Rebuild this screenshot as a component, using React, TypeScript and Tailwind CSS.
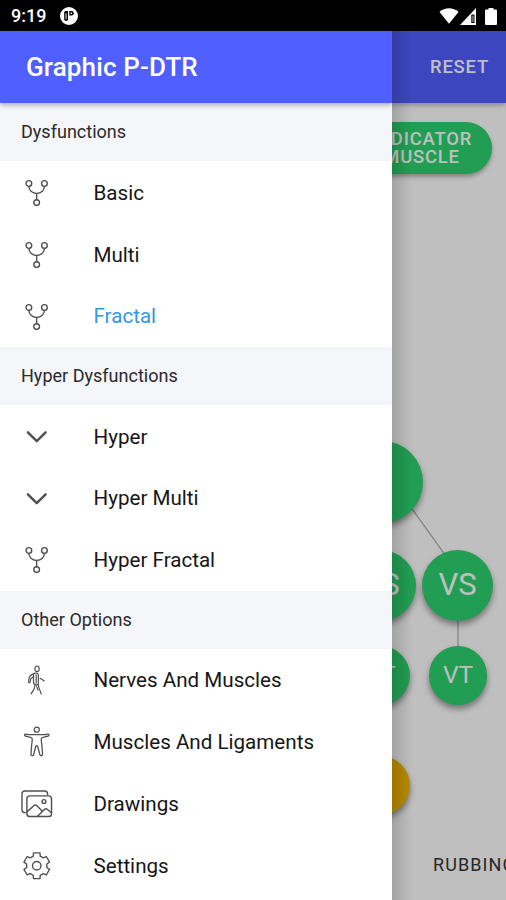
import React, { FC } from 'react';
import type { IconType } from 'react-icons';
import { IoChevronDownOutline, IoImagesOutline } from 'react-icons/io5';

interface FigureProps { className?: string; }

const ForkFigure: FC<FigureProps> = ({ className }) => (
  <svg className={className} viewBox="0 0 32 32" fill="none" stroke="currentColor" strokeWidth="1.4" strokeLinecap="round">
    <circle cx="8" cy="6.600" r="2.900" />
    <circle cx="23.800" cy="6.600" r="2.900" />
    <circle cx="15.900" cy="26" r="2.900" />
    <path d="M8 9.500C8 13.500 11.200 16.700 15.900 16.700S23.800 13.500 23.800 9.500M15.900 16.700V23" />
  </svg>
);

const WalkFigure: FC<FigureProps> = ({ className }) => (
  <svg className={className} viewBox="0 0 32 32" fill="none" stroke="currentColor" strokeWidth="1.2" strokeLinecap="round" strokeLinejoin="round">
    <ellipse cx="16.300" cy="3.800" rx="2.200" ry="2.800" />
    <path d="M13.600 8.500C11 9.600 8.600 11.500 8.200 13L7.700 17.200C7.900 18.300 9 18.200 9.300 17.200L9.900 13.900L12.300 12.200" />
    <path d="M13.600 8.500C15.500 7.600 17.600 8.300 17.600 10.200V18.800C17.600 19.800 17 20.500 16 20.500C14 20.300 12.700 19.200 12.700 17.600V9.500" />
    <path d="M15.400 10V18.500M19.500 13.500L23.600 16.200" />
    <path d="M14.200 20.500L13.200 24.500L10.300 29.300M17.600 20L18.200 23L20.600 29.600M16 22L17.200 25.500" />
  </svg>
);

const BodyFigure: FC<FigureProps> = ({ className }) => (
  <svg className={className} viewBox="0 0 32 32" fill="none" stroke="currentColor" strokeWidth="1.3" strokeLinecap="round" strokeLinejoin="round">
    <circle cx="16" cy="3.700" r="2.600" />
    <path d="M5 8.200C8 9.200 12 8.700 16 8.700S24 9.200 27 8.200C28.700 8 28.900 9.800 27.500 10.300C25 11.200 21.500 11.200 20.800 12.400C20.300 13.500 20.700 16 21.200 19.500L21.900 28.800C21.900 30.500 19.600 30.700 19.200 29.200L16.900 20.500C16.600 19.700 15.400 19.700 15.100 20.500L12.800 29.200C12.400 30.700 10.100 30.500 10.100 28.800L10.800 19.500C11.300 16 11.700 13.500 11.200 12.400C10.500 11.200 7 11.200 4.500 10.300C3.100 9.800 3.300 8 5 8.200Z" />
  </svg>
);

// Six teeth, four corners per tooth: root, tip, tip, root
const GEAR_POINTS = [0, 60, 120, 180, 240, 300]
  .flatMap((tooth) => [[-20, 10.4], [-14, 13.5], [14, 13.5], [20, 10.4]].map(([offset, radius]) => {
    const angle = ((tooth + offset) * Math.PI) / 180;
    return `${(16 + radius * Math.sin(angle)).toFixed(2)},${(16 - radius * Math.cos(angle)).toFixed(2)}`;
  }))
  .join(' ');

const GearFigure: FC<FigureProps> = ({ className }) => (
  <svg className={className} viewBox="0 0 32 32" fill="none" stroke="currentColor" strokeWidth="1.4" strokeLinejoin="round">
    <polygon points={GEAR_POINTS} />
    <circle cx="16" cy="16" r="4.300" />
  </svg>
);

interface MenuEntry { label: string; icon: IconType | FC<FigureProps>; active?: boolean; }
interface MenuSection { title: string; entries: MenuEntry[]; }

const SECTIONS: MenuSection[] = [
  {
    title: 'Dysfunctions',
    entries: [
      { label: 'Basic', icon: ForkFigure },
      { label: 'Multi', icon: ForkFigure },
      { label: 'Fractal', icon: ForkFigure, active: true },
    ],
  },
  {
    title: 'Hyper Dysfunctions',
    entries: [
      { label: 'Hyper', icon: IoChevronDownOutline },
      { label: 'Hyper Multi', icon: IoChevronDownOutline },
      { label: 'Hyper Fractal', icon: ForkFigure },
    ],
  },
  {
    title: 'Other Options',
    entries: [
      { label: 'Nerves And Muscles', icon: WalkFigure },
      { label: 'Muscles And Ligaments', icon: BodyFigure },
      { label: 'Drawings', icon: IoImagesOutline },
      { label: 'Settings', icon: GearFigure },
    ],
  },
];

const StatusBar: FC = () => (
  <div className="h-[31px] shrink-0 bg-black text-white flex items-center justify-between pl-[11px] pr-[9px] pt-[1px]">
    <div className="flex items-center gap-[14px]">
      <span className="text-[18px] leading-none font-medium">9:19</span>
      <svg className="w-[18px] h-[18px]" viewBox="0 0 18 18">
        <circle cx="9" cy="9" r="9" fill="white" />
        <path d="M4.200 5.500a1.500 1.500 0 0 1 1.500-1.500H8v8.500a2 2 0 0 1-3.800 0z" fill="black" />
        <path d="M9.300 4h2.200a2.300 2.300 0 0 1 2.300 2.300 2.300 2.300 0 0 1-2.300 2.300H9.300z" fill="black" />
        <path d="M5.600 6.200h.9v6h-.9zM10.600 5.500h1.500v1.600h-1.500z" fill="white" />
      </svg>
    </div>
    <div className="flex items-center">
      <svg className="w-[20px] h-[16px]" viewBox="0 0 20 16">
        <path d="M0.500 4C6-1 14-1 19.500 4L10 15.800z" fill="white" />
      </svg>
      <svg className="w-[16px] h-[17px] ml-[1px]" viewBox="0 0 16 17">
        <path d="M16 0v17H0z" fill="white" />
        <path d="M11.300 6.500h3.200V15h-3.200z" fill="black" />
        <path d="M12.600 7.500h.8v6.500h-.8z" fill="white" />
      </svg>
      <svg className="w-[12px] h-[17px] ml-[9px]" viewBox="0 0 12 17">
        <path d="M3.500 0h5v1.600H11a1 1 0 0 1 1 1V16a1 1 0 0 1-1 1H1a1 1 0 0 1-1-1V2.600a1 1 0 0 1 1-1h2.500z" fill="white" />
      </svg>
    </div>
  </div>
);

interface NodeProps { className: string; children?: React.ReactNode; }
const Node: FC<NodeProps> = ({ className, children }) => (
  <div
    className={`absolute rounded-full flex items-center justify-center text-white shadow-[0_4px_6px_rgba(0,0,0,0.4)] ${className}`}
  >
    {children}
  </div>
);

const Diagram: FC = () => (
  <div className="relative flex-1 overflow-hidden bg-white">
    <svg className="absolute left-0 top-0 w-[506px] h-[797px]" viewBox="0 0 506 797">
      <path d="M390 375L458 470V572M381 483V572" stroke="#aaa" strokeWidth="1.2" fill="none" />
    </svg>
    <button className="absolute left-[353px] top-[19px] w-[139px] h-[52px] pr-[2px] rounded-full bg-[#2dd36f] text-white text-[18.400px] leading-[18px] font-medium tracking-[0.045em] shadow-[0_3px_4px_rgba(0,0,0,0.3)]">
      INDICATOR<br />MUSCLE
    </button>
    <Node className="left-[341px] top-[338px] w-[82px] h-[82px] bg-[#2dd36f]" />
    <Node className="left-[345px] top-[447px] w-[71px] h-[71px] bg-[#2dd36f] text-[31px]">VS</Node>
    <Node className="left-[422px] top-[447px] w-[71px] h-[71px] bg-[#2dd36f] text-[31px]">VS</Node>
    <Node className="left-[351px] top-[543px] w-[59px] h-[59px] bg-[#2dd36f] text-[24.500px]">VT</Node>
    <Node className="left-[429px] top-[543px] w-[58px] h-[59px] bg-[#2dd36f] text-[24.500px]">VT</Node>
    <Node className="left-[351px] top-[653px] w-[59px] h-[59px] bg-[#f5b800]" />
    <span className="absolute left-[433px] top-[751px] text-[18px] leading-[22px] tracking-[0.06em] text-[#333] whitespace-nowrap">
      RUBBING
    </span>
  </div>
);

const MenuItem: FC<MenuEntry> = ({ label, icon: Icon, active }) => (
  <li className="h-[61.800px] flex items-center pl-[21px] pt-[1px]">
    <Icon className="w-[31.500px] h-[31.500px] mr-[41px] text-[#505050] [&_[stroke-width='32']]:[stroke-width:23px] [&_[stroke-width='48']]:[stroke-width:40px]" />
    <span className={`text-[20.600px] pt-[1px] ${active ? 'text-[#3498e0]' : 'text-[#161616]'}`}>{label}</span>
  </li>
);

const SideMenu: FC = () => (
  <aside className="absolute left-0 top-0 w-[392px] h-full bg-white overflow-hidden">
    <header className="relative z-10 h-[72px] pl-[26px] flex items-center bg-[#505fff] text-white shadow-[0_2px_5px_rgba(0,0,0,0.3)]">
      <h1 className="text-[26px] font-medium tracking-[0.005em]">Graphic P-DTR</h1>
    </header>
    {SECTIONS.map((section) => (
      <section key={section.title}>
        <h2 className="h-[58.400px] pl-[21px] pb-[1px] flex items-center bg-[#f4f6fa] text-[18.050px] text-[#2a2a2a]">{section.title}</h2>
        <ul>
          {section.entries.map((entry) => (
            <MenuItem key={entry.label} {...entry} />
          ))}
        </ul>
      </section>
    ))}
  </aside>
);

const App: React.FC = () => (
  <div className="w-[506px] h-[900px] flex flex-col overflow-hidden font-[Roboto,sans-serif]">
    <StatusBar />
    <div className="relative flex-1 flex flex-col overflow-hidden">
      <header className="relative z-10 h-[72px] shrink-0 pr-[17px] flex items-center justify-end bg-[#505fff] text-white shadow-[0_2px_5px_rgba(0,0,0,0.3)]">
        <button className="text-[18.400px] font-medium tracking-[0.045em]">RESET</button>
      </header>
      <Diagram />
      <div className="absolute inset-0 z-20 bg-black/25">
        <div className="absolute left-[392px] top-0 w-[20px] h-full bg-linear-to-r from-black/15 to-transparent" />
        <SideMenu />
      </div>
    </div>
  </div>
);

export default App;
